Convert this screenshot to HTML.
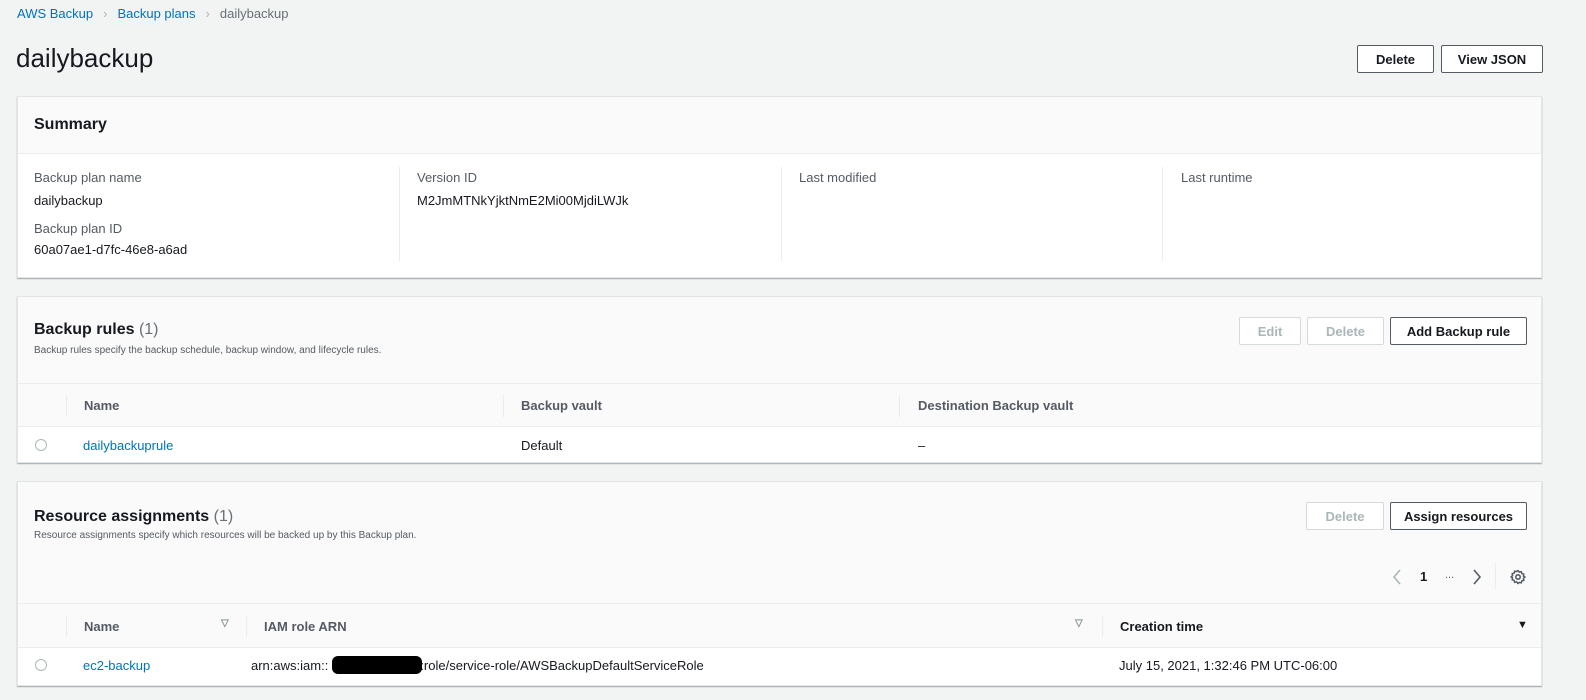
<!DOCTYPE html>
<html><head><meta charset="utf-8"><style>
*{box-sizing:border-box;margin:0;padding:0}
body{width:1586px;height:700px;background:#f2f3f3;font-family:"Liberation Sans",sans-serif;color:#16191f;font-size:13px;position:relative;overflow:hidden}
.a{position:absolute;white-space:nowrap}
.link{color:#0073bb}
.card{position:absolute;left:17px;width:1525px;background:#fff;border:1px solid #e3e6e6;box-shadow:0 1px 1px 0 rgba(0,28,36,.35);overflow:hidden}
.hd{position:absolute;left:0;right:0;top:0;background:#fafafa;border-bottom:1px solid #eaeded}
.btn{position:absolute;height:28px;border:1px solid #545b64;border-radius:2px;background:#fff;font-weight:bold;font-size:13px;color:#545b64;display:flex;align-items:center;justify-content:center}
.dis{border-color:#d5dbdb;color:#aab7b8}
.th{position:absolute;background:#fafafa;left:0;right:0;border-bottom:1px solid #eaeded;font-weight:bold;color:#545b64}
.sep{position:absolute;width:1px;background:#eaeded}
.radio{position:absolute;width:12px;height:12px;border:1px solid #aab7b8;border-radius:50%}
h2{font-size:16px;font-weight:bold}
.lbl{color:#545b64}
</style></head><body>
<div class="a" style="left:17px;top:6px"><span class="link">AWS Backup</span><span style="color:#aab7b8;margin:0 10px">&#x203A;</span><span class="link">Backup plans</span><span style="color:#aab7b8;margin:0 10px">&#x203A;</span><span style="color:#687078">dailybackup</span></div>
<div class="a" style="left:16px;top:43px;font-size:26px">dailybackup</div>
<div class="btn" style="left:1357px;top:45px;width:77px;color:#16191f">Delete</div>
<div class="btn" style="left:1441px;top:45px;width:102px;color:#16191f">View JSON</div>

<div class="card" style="top:96px;height:182px">
 <div class="hd" style="height:57px"><h2 class="a" style="left:16px;top:19px">Summary</h2></div>
 <div class="a lbl" style="left:16px;top:73px">Backup plan name</div>
 <div class="a" style="left:16px;top:96px">dailybackup</div>
 <div class="a lbl" style="left:16px;top:124px">Backup plan ID</div>
 <div class="a" style="left:16px;top:145px;width:154px;overflow:hidden">60a07ae1-d7fc-46e8-a6ad-</div>
 <div class="sep" style="left:381px;top:70px;height:94px"></div>
 <div class="a lbl" style="left:399px;top:73px">Version ID</div>
 <div class="a" style="left:399px;top:96px;width:212px;overflow:hidden">M2JmMTNkYjktNmE2Mi00MjdiLWJkO</div>
 <div class="sep" style="left:763px;top:70px;height:94px"></div>
 <div class="a lbl" style="left:781px;top:73px">Last modified</div>
 <div class="sep" style="left:1144px;top:70px;height:94px"></div>
 <div class="a lbl" style="left:1163px;top:73px">Last runtime</div>
</div>

<div class="card" style="top:296px;height:167px">
 <div class="hd" style="height:87px;border-bottom:none">
  <h2 class="a" style="left:16px;top:24px">Backup rules <span style="font-weight:normal;color:#687078">(1)</span></h2>
  <div class="a" style="left:16px;top:48px;font-size:10px;color:#545b64">Backup rules specify the backup schedule, backup window, and lifecycle rules.</div>
  <div class="btn dis" style="left:1221px;top:20px;width:62px">Edit</div>
  <div class="btn dis" style="left:1289px;top:20px;width:77px">Delete</div>
  <div class="btn" style="left:1372px;top:20px;width:137px;color:#16191f">Add Backup rule</div>
 </div>
 <div class="th" style="top:86px;height:44px;border-top:1px solid #eaeded">
  <div class="sep" style="left:48px;top:11px;height:22px"></div>
  <div class="a" style="left:66px;top:14px">Name</div>
  <div class="sep" style="left:485px;top:11px;height:22px"></div>
  <div class="a" style="left:503px;top:14px">Backup vault</div>
  <div class="sep" style="left:881px;top:11px;height:22px"></div>
  <div class="a" style="left:900px;top:14px">Destination Backup vault</div>
 </div>
 <div class="radio" style="left:17px;top:142px"></div>
 <div class="a link" style="left:65px;top:141px">dailybackuprule</div>
 <div class="a" style="left:503px;top:141px">Default</div>
 <div class="a" style="left:900px;top:141px">–</div>
</div>

<div class="card" style="top:481px;height:205px">
 <div class="hd" style="height:122px;border-bottom:none">
  <h2 class="a" style="left:16px;top:26px">Resource assignments <span style="font-weight:normal;color:#687078">(1)</span></h2>
  <div class="a" style="left:16px;top:48px;font-size:10px;color:#545b64">Resource assignments specify which resources will be backed up by this Backup plan.</div>
  <div class="btn dis" style="left:1288px;top:20px;width:78px">Delete</div>
  <div class="btn" style="left:1372px;top:20px;width:137px;color:#16191f">Assign resources</div>
  <svg class="a" style="left:1374px;top:87px" width="10" height="16"><path d="M8 1L2 8l6 7" stroke="#aab7b8" stroke-width="1.6" fill="none"/></svg>
  <div class="a" style="left:1402px;top:87px;font-weight:bold">1</div>
  <div class="a" style="left:1427px;top:87px;color:#545b64;font-size:11px">...</div>
  <svg class="a" style="left:1454px;top:87px" width="10" height="16"><path d="M2 1l6 7-6 7" stroke="#545b64" stroke-width="1.6" fill="none"/></svg>
  <div class="sep" style="left:1477px;top:81px;height:26px"></div>
  <svg class="a" style="left:1492px;top:87px" width="16" height="16" viewBox="0 0 16 16"><circle cx="8" cy="8" r="2.2" fill="none" stroke="#545b64" stroke-width="1.6"/><path d="M8 1.5l1.3 1.6 2-.5.6 2 2 .6-.5 2L15 8l-1.6 1.3.5 2-2 .6-.6 2-2-.5L8 14.5l-1.3-1.6-2 .5-.6-2-2-.6.5-2L1 8l1.6-1.3-.5-2 2-.6.6-2 2 .5z" fill="none" stroke="#545b64" stroke-width="1.5" stroke-linejoin="round"/></svg>
 </div>
 <div class="th" style="top:121px;height:45px;border-top:1px solid #eaeded">
  <div class="sep" style="left:48px;top:11px;height:22px"></div>
  <div class="a" style="left:66px;top:15px">Name</div>
  <div class="a" style="left:203px;top:14px;color:#879596;font-size:10px">&#9661;</div>
  <div class="sep" style="left:228px;top:11px;height:22px"></div>
  <div class="a" style="left:246px;top:15px">IAM role ARN</div>
  <div class="a" style="left:1057px;top:14px;color:#879596;font-size:10px">&#9661;</div>
  <div class="sep" style="left:1084px;top:11px;height:22px"></div>
  <div class="a" style="left:1102px;top:15px;color:#16191f">Creation time</div>
  <div class="a" style="left:1499px;top:15px;color:#16191f;font-size:11px">&#9660;</div>
 </div>
 <div class="radio" style="left:17px;top:177px"></div>
 <div class="a link" style="left:65px;top:176px">ec2-backup</div>
 <div class="a" style="left:233px;top:176px">arn:aws:iam::<span style="display:inline-block;width:92px"></span>:role/service-role/AWSBackupDefaultServiceRole</div>
 <div class="a" style="left:314px;top:174px;width:90px;height:18px;background:#000;border-radius:6px"></div>
 <div class="a" style="left:1101px;top:176px">July 15, 2021, 1:32:46 PM UTC-06:00</div>
</div>
</body></html>
